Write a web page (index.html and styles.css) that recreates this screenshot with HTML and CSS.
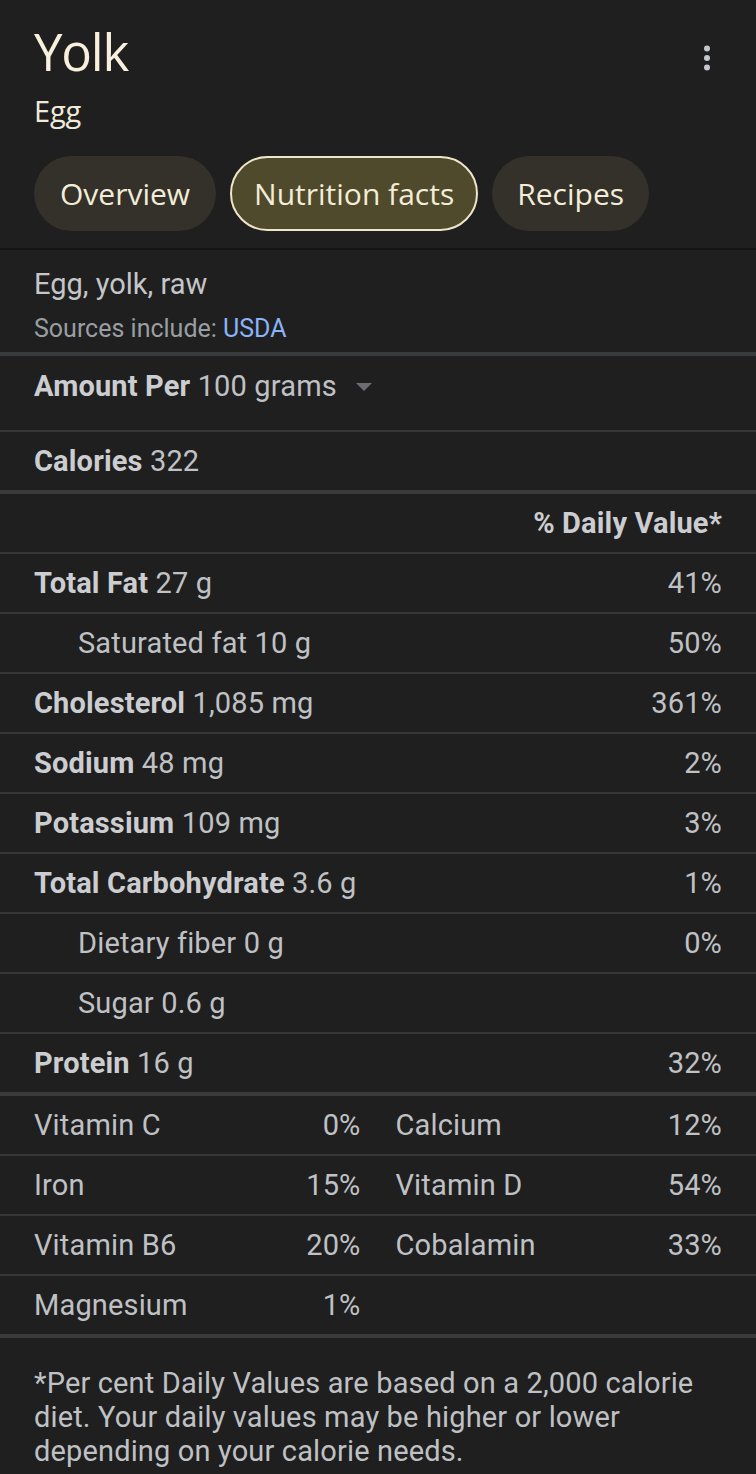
FILE: index.html
```html
<!DOCTYPE html>
<html lang="en">
<head>
<meta charset="utf-8">
<title>Yolk - Nutrition facts</title>
<link rel="stylesheet" href="styles.css">
</head>
<body>
<div class="page">
  <header class="header">
    <div class="title-row">
      <h1 class="title">Yolk</h1>
      <button class="menu" aria-label="More options">
        <svg width="10" height="28" viewBox="0 0 10 28"><circle cx="5" cy="4.5" r="3" fill="#c4c7d0"/><circle cx="5" cy="14" r="3" fill="#c4c7d0"/><circle cx="5" cy="23.5" r="3" fill="#c4c7d0"/></svg>
      </button>
    </div>
    <div class="subtitle">Egg</div>
    <nav class="tabs">
      <span class="tab">Overview</span>
      <span class="tab active">Nutrition facts</span>
      <span class="tab">Recipes</span>
    </nav>
  </header>

  <section class="source">
    <div class="food-name">Egg, yolk, raw</div>
    <div class="sources">Sources include: <span class="link">USDA</span></div>
  </section>

  <div class="amount row thick"><b>Amount Per</b>&nbsp;100 grams <span class="caret"></span></div>
  <div class="row cal"><span><b>Calories</b> 322</span></div>
  <div class="row thick-top dv"><b>% Daily Value*</b></div>
  <div class="row"><span><b>Total Fat</b> 27 g</span><span>41%</span></div>
  <div class="row sub"><span>Saturated fat 10 g</span><span>50%</span></div>
  <div class="row"><span><b>Cholesterol</b> 1,085 mg</span><span>361%</span></div>
  <div class="row"><span><b>Sodium</b> 48 mg</span><span>2%</span></div>
  <div class="row"><span><b>Potassium</b> 109 mg</span><span>3%</span></div>
  <div class="row"><span><b>Total Carbohydrate</b> 3.6 g</span><span>1%</span></div>
  <div class="row sub"><span>Dietary fiber 0 g</span><span>0%</span></div>
  <div class="row sub"><span>Sugar 0.6 g</span><span></span></div>
  <div class="row last"><span><b>Protein</b> 16 g</span><span>32%</span></div>

  <div class="vitamins">
    <div class="vrow"><div class="vcell"><span>Vitamin C</span><span>0%</span></div><div class="vcell"><span>Calcium</span><span>12%</span></div></div>
    <div class="vrow"><div class="vcell"><span>Iron</span><span>15%</span></div><div class="vcell"><span>Vitamin D</span><span>54%</span></div></div>
    <div class="vrow"><div class="vcell"><span>Vitamin B6</span><span>20%</span></div><div class="vcell"><span>Cobalamin</span><span>33%</span></div></div>
    <div class="vrow vlast"><div class="vcell"><span>Magnesium</span><span>1%</span></div><div class="vcell"></div></div>
  </div>

  <p class="footnote">*Per cent Daily Values are based on a 2,000 calorie diet. Your daily values may be higher or lower depending on your calorie needs.</p>
</div>
</body>
</html>
```

FILE: styles.css
```css
* { box-sizing: border-box; }
html, body {
  margin: 0;
  padding: 0;
  background: #1f1f1f;
}
body {
  font-family: Roboto, "Liberation Sans", sans-serif;
  color: #bfc1c4;
}
.page {
  width: 756px;
  min-height: 1474px;
  overflow: hidden;
}
.header {
  padding: 18px 34px 17px;
  border-bottom: 2px solid #151515;
}
.title-row {
  display: flex;
  justify-content: space-between;
  align-items: flex-start;
}
.title {
  margin: 0;
  font-family: "Open Sans", sans-serif;
  font-weight: 400;
  font-size: 51px;
  line-height: 66px;
  color: #f8efdc;
  letter-spacing: -1.2px;
}
.menu {
  background: none;
  border: 0;
  padding: 0;
  margin: 26px 10px 0 0;
  width: 10px;
  height: 28px;
  display: block;
}
.menu svg { display: block; }
.subtitle {
  font-family: "Open Sans", sans-serif;
  font-size: 29px;
  line-height: 40px;
  color: #f1eadb;
  margin-top: 7px;
  letter-spacing: -0.2px;
}
.tabs {
  display: flex;
  gap: 14px;
  margin-top: 25px;
}
.tab {
  display: flex;
  align-items: center;
  height: 75px;
  padding: 0 25px;
  border-radius: 38px;
  background: #33312a;
  font-family: "Open Sans", sans-serif;
  font-weight: 500;
  font-size: 30px;
  color: #f3ecd8;
}
.tab:first-child { padding: 0 26px; }
.tab.active {
  background: #504a2c;
  border: 2px solid #efe6c9;
  padding: 0 22px;
}

.source {
  padding: 14px 34px 7px;
}
.food-name {
  font-size: 29px;
  line-height: 40px;
  color: #c4c6c9;
}
.sources {
  margin-top: 9px;
  font-size: 25px;
  line-height: 32px;
  color: #9a9ea3;
}
.link { color: #8ab4f8; }

.row {
  display: flex;
  justify-content: space-between;
  align-items: center;
  min-height: 60px;
  padding: 9px 34px;
  font-size: 29px;
  letter-spacing: 0.15px;
  line-height: 40px;
  border-bottom: 2px solid #353638;
  color: #bfc1c4;
}
.row b {
  font-weight: 700;
  color: #cbcdd0;
}
.row.thick {
  border-top: 4px solid #3a3b3d;
}
.amount {
  align-items: flex-start;
  min-height: 78px;
  padding: 10px 34px 24px;
  justify-content: flex-start;
}
.caret {
  display: inline-block;
  width: 0;
  height: 0;
  margin-left: 19px;
  margin-top: 17px;
  border-left: 8px solid transparent;
  border-right: 8px solid transparent;
  border-top: 8px solid #6b6d70;
}
.row.cal {
  border-bottom: 0;
  min-height: 58px;
}
.row.thick-top {
  border-top: 4px solid #3a3b3d;
  min-height: 62px;
}
.dv {
  justify-content: flex-end;
}
.sub { padding-left: 78px; }
.row.last {
  border-bottom: 4px solid #3a3b3d;
  min-height: 62px;
}

.vrow {
  display: grid;
  grid-template-columns: 1fr 1fr;
  column-gap: 35px;
  padding: 0 34px;
  min-height: 60px;
  border-bottom: 2px solid #353638;
  font-size: 29px;
  letter-spacing: 0.15px;
  line-height: 40px;
}
.vrow.vlast {
  border-bottom: 4px solid #3a3b3d;
  min-height: 62px;
}
.vcell {
  display: flex;
  justify-content: space-between;
  align-items: center;
  padding: 9px 0;
}

.footnote {
  margin: 0;
  padding: 28px 34px 0;
  font-size: 29px;
  letter-spacing: 0.15px;
  line-height: 34px;
  color: #bfc1c4;
}
```
